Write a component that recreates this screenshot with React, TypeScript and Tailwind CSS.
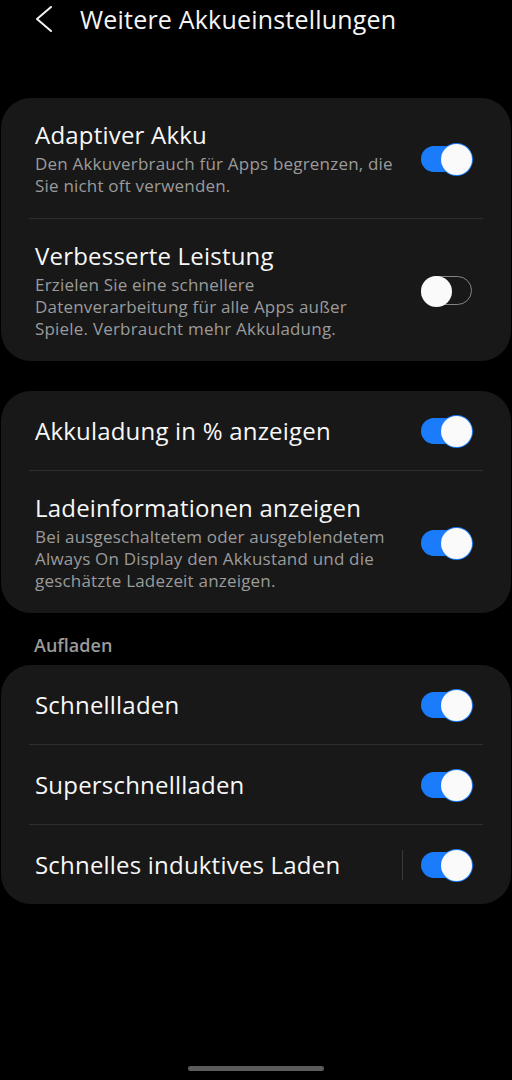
type Item = {
    title: string;
    desc?: string;
    on: boolean;
    divider?: boolean;
};

const groups: { label?: string; items: Item[] }[] = [
    {
        items: [
            { title: 'Adaptiver Akku', desc: 'Den Akkuverbrauch für Apps begrenzen, die Sie nicht oft verwenden.', on: true },
            { title: 'Verbesserte Leistung', desc: 'Erzielen Sie eine schnellere Datenverarbeitung für alle Apps außer Spiele. Verbraucht mehr Akkuladung.', on: false },
        ],
    },
    {
        items: [
            { title: 'Akkuladung in % anzeigen', on: true },
            { title: 'Ladeinformationen anzeigen', desc: 'Bei ausgeschaltetem oder ausgeblendetem Always On Display den Akkustand und die geschätzte Ladezeit anzeigen.', on: true },
        ],
    },
    {
        label: 'Aufladen',
        items: [
            { title: 'Schnellladen', on: true },
            { title: 'Superschnellladen', on: true },
            { title: 'Schnelles induktives Laden', on: true, divider: true },
        ],
    },
];

function Toggle({ on }: { on: boolean }) {
    return (
        <div className="relative w-[51px] h-[32px] flex items-center">
            <div
                className={
                    on
                        ? 'w-[51px] h-[26px] rounded-full bg-[#1a7cfa]'
                        : 'w-[51px] h-[29px] rounded-full border-[1.5px] border-[#858585]'
                }
            />
            <div
                className={
                    on
                        ? 'absolute right-0 top-[1px] w-[31px] h-[31px] rounded-full bg-[#fafafa] shadow-[0_0_0_1px_#1a7cfa]'
                        : 'absolute left-0 top-[1px] w-[31px] h-[31px] rounded-full bg-[#fafafa]'
                }
            />
        </div>
    );
}

function Row({ item }: { item: Item }) {
    return (
        <div className={`flex items-center pl-[34px] pr-[39px] ${item.desc ? 'pt-[22px] pb-[21px]' : 'h-[79px]'}`}>
            <div className="flex-1 min-w-0">
                <div className="text-[24px] leading-[30px] tracking-[0.2px] text-[#f7f7f7]">{item.title}</div>
                {item.desc && (
                    <div className="mt-[3px] max-w-[364px] text-[17px] leading-[22px] tracking-[0.2px] text-[#9b9b9b]">{item.desc}</div>
                )}
            </div>
            {item.divider && <div className="w-px h-[30px] bg-[#3a3a3a] mr-[18px]" />}
            <Toggle on={item.on} />
        </div>
    );
}

export default function App() {
    return (
        <div className="min-h-[1080px] bg-black flex flex-col font-['Open_Sans',sans-serif]">
            <div className="h-[98px] flex items-start">
                <div className="flex items-center h-[38px] pl-[36px]">
                    <svg width="16" height="26" viewBox="0 0 16 26" fill="none" stroke="#f2f2f2" strokeWidth="2" strokeLinecap="round" strokeLinejoin="round">
                        <polyline points="15,1 1,13 15,25" />
                    </svg>
                    <h1 className="ml-[28px] text-[25px] tracking-[0.2px] text-[#f5f5f5] leading-[38px]">Weitere Akkueinstellungen</h1>
                </div>
            </div>

            <div className="flex flex-col">
                {groups.map((g, gi) => (
                    <div key={gi} className={gi === 0 ? '' : g.label ? 'mt-[20px]' : 'mt-[30px]'}>
                        {g.label && (
                            <div className="px-[34px] pb-[8px] text-[18px] leading-[24px] font-semibold text-[#9a9a9a]">{g.label}</div>
                        )}
                        <div className="mx-[1px] bg-[#181818] rounded-[30px]">
                            {g.items.map((it, i) => (
                                <div key={i}>
                                    {i > 0 && <div className="mx-[28px] h-px bg-[#2e2e2e]" />}
                                    <Row item={it} />
                                </div>
                            ))}
                        </div>
                    </div>
                ))}
            </div>

            <div className="mt-auto mb-[9px] flex justify-center">
                <div className="w-[136px] h-[5px] rounded-full bg-[#5c5c5c]" />
            </div>
        </div>
    );
}
